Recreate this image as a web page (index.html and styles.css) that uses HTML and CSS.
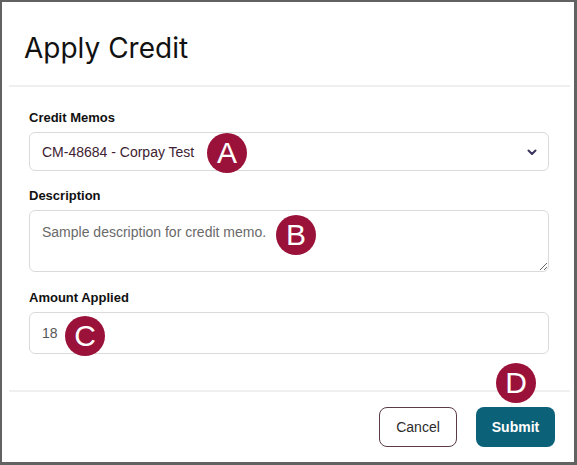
FILE: index.html
```html
<!DOCTYPE html>
<html lang="en">
<head>
<meta charset="utf-8">
<title>Apply Credit</title>
<link rel="stylesheet" href="styles.css">
</head>
<body>
<div class="frame">
  <header class="header">
    <h1 class="title">Apply Credit</h1>
  </header>
  <div class="divider divider-top"></div>
  <form class="form">
    <div class="field">
      <label class="label">Credit Memos</label>
      <div class="select">
        <span class="select-text">CM-48684 - Corpay Test</span>
        <svg class="chevron" width="10" height="7" viewBox="0 0 10 7"><path d="M1.5 1.5 L5 5 L8.5 1.5" fill="none" stroke="#3b355e" stroke-width="2" stroke-linecap="round" stroke-linejoin="round"/></svg>
      </div>
    </div>
    <div class="field">
      <label class="label">Description</label>
      <textarea class="textarea" placeholder="Sample description for credit memo."></textarea>
    </div>
    <div class="field field-last">
      <label class="label">Amount Applied</label>
      <input class="input" type="text" value="18">
    </div>
  </form>
  <div class="divider divider-bottom"></div>
  <footer class="footer">
    <button class="btn btn-cancel" type="button">Cancel</button>
    <button class="btn btn-submit" type="button">Submit</button>
  </footer>
  <span class="badge badge-a">A</span>
  <span class="badge badge-b">B</span>
  <span class="badge badge-c">C</span>
  <span class="badge badge-d">D</span>
</div>
</body>
</html>
```

FILE: styles.css
```css
* { box-sizing: border-box; }
html, body { margin: 0; padding: 0; background: #ffffff; }
body { font-family: "Liberation Sans", Arial, sans-serif; }

.frame {
  position: relative;
  width: 577px;
  height: 465px;
  border: 2px solid #626262;
  border-right-width: 3px;
  border-bottom-width: 3px;
  background: #fff;
  display: flex;
  flex-direction: column;
}

.header { padding: 29px 0 0 22px; }
.title {
  margin: 0;
  font-family: Inter, "Liberation Sans", sans-serif;
  font-weight: 400;
  font-size: 28px;
  line-height: 34px;
  color: #111;
  letter-spacing: 0;
}

.divider { height: 2px; background: #efefef; margin: 0 4px 0 7px; }
.divider-top { margin-top: 20px; }

.form {
  padding: 23px 25px 0 27px;
  display: flex;
  flex-direction: column;
}
.field { display: flex; flex-direction: column; margin-bottom: 17px; }
.field:nth-child(2) { margin-bottom: 18px; }
.field-last { margin-bottom: 0; }

.label {
  font-size: 13px;
  line-height: 16px;
  font-weight: 700;
  color: #111;
  margin-bottom: 6px;
}

.select {
  height: 39px;
  border: 1px solid #dadada;
  border-radius: 6px;
  display: flex;
  align-items: center;
  justify-content: space-between;
  padding: 0 11px 0 12px;
}
.select-text { font-size: 14px; color: #3d2231; }
.chevron { margin-top: 1px; }

.textarea {
  height: 62px;
  border: 1px solid #dadada;
  border-radius: 6px;
  padding: 13px 12px;
  font-family: "Liberation Sans", Arial, sans-serif;
  font-size: 14px;
  line-height: 16px;
  color: #666;
  resize: vertical;
  outline: none;
}
.textarea::placeholder { color: #6a6a6a; opacity: 1; }

.input {
  height: 42px;
  border: 1px solid #dadada;
  border-radius: 6px;
  padding: 0 12px;
  font-family: "Liberation Sans", Arial, sans-serif;
  font-size: 14px;
  color: #555;
  outline: none;
}

.divider-bottom { margin-top: 36px; }

.footer {
  display: flex;
  justify-content: flex-end;
  gap: 19px;
  padding: 15px 19px 0 0;
}
.btn {
  height: 40px;
  border-radius: 8px;
  font-family: "Liberation Sans", Arial, sans-serif;
  font-size: 14px;
  cursor: pointer;
}
.btn-cancel {
  width: 78px;
  background: #fff;
  border: 1.5px solid #5b3b47;
  color: #2b2b2b;
}
.btn-submit {
  width: 79px;
  background: #0a6178;
  border: none;
  color: #fff;
  font-weight: 700;
}

.badge {
  position: absolute;
  width: 40px;
  height: 40px;
  border-radius: 50%;
  background: #9a1239;
  color: #fff;
  font-family: "Liberation Sans", Arial, sans-serif;
  font-size: 30px;
  line-height: 40px;
  text-align: center;
}
.badge-a { left: 205px; top: 131px; }
.badge-b { left: 274px; top: 213px; }
.badge-c { left: 63px; top: 314px; }
.badge-d { left: 494px; top: 361px; }
```
